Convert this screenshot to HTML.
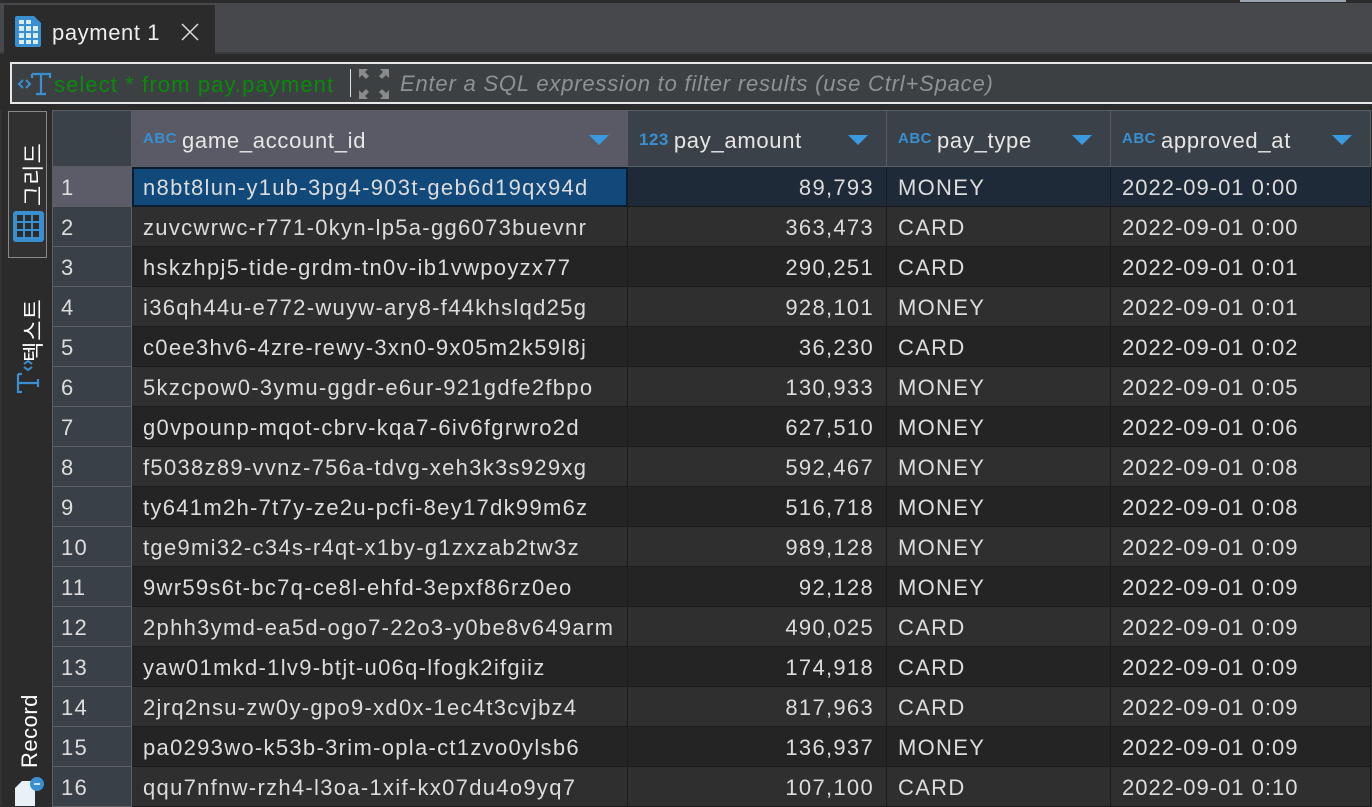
<!DOCTYPE html>
<html><head><meta charset="utf-8"><style>
*{margin:0;padding:0;box-sizing:border-box}
body{width:1372px;height:806px;overflow:hidden;background:#2b2b2b;font-family:"Liberation Sans","Noto Sans CJK KR",sans-serif;color:#dcdcdc;position:relative}
.topbar{position:absolute;left:0;top:3px;width:1372px;height:51px;background:#47484b;border-bottom:2px solid #38393b}
.tab{position:absolute;left:4px;top:5px;width:211px;height:49px;background:#2b2b2b}
.tab .t{position:absolute;left:48px;top:15px;font-size:22px;color:#eee;letter-spacing:0.6px}
.filter{position:absolute;left:10px;top:62px;width:1362px;height:42px;background:#3c4043;border:2px solid #e8e8e8;border-right:none}
.filter .q{position:absolute;left:42px;top:8px;font-size:22px;color:#0a8a0a;letter-spacing:1.1px}
.filter .sep{position:absolute;left:338px;top:5px;width:1px;height:28px;background:#ddd}
.filter .ph{position:absolute;left:388px;top:7px;font-size:22px;color:#8d9296;font-style:italic;letter-spacing:0.8px}
.side{position:absolute;left:0;top:110px;width:52px;height:696px;background:#2b2b2b;border-left:2px solid #333}
.vbox{position:absolute;left:8px;top:111px;width:39px;height:147px;border:1px solid #888;background:#313131}
.vt{position:absolute;transform:rotate(-90deg);transform-origin:left top;font-size:22px;color:#fff;white-space:nowrap;letter-spacing:1px}
table{position:absolute;left:52px;top:110px;border-collapse:collapse;table-layout:fixed}
td,th{height:40px;font-size:22px;white-space:nowrap;overflow:hidden;border:1px solid #1c1c1c;padding:2px 11px 0;font-weight:normal;text-align:left;letter-spacing:1.3px}
th{height:56px;background:#3b4148;border:1px solid #5a5d62;color:#e6e6e6;position:relative;padding-top:4px;letter-spacing:0.7px}
th .ic{font-size:15px;font-weight:bold;color:#3a8fd0;vertical-align:5px;margin-right:5px;letter-spacing:0.5px}
th .ar{position:absolute;right:18px;top:24px;width:0;height:0;border-left:10px solid transparent;border-right:10px solid transparent;border-top:10px solid #3a9ae0}
td.n{background:#3a4047;border:1px solid #5c5f63;color:#ddd;padding-left:8px}
tr.e td{background:#2f2f2f} tr.o td{background:#242424}
tr.e td.n,tr.o td.n{background:#3a4047}
tr.s td{background:#1f2a38} tr.s td.n{background:#5c5b68}
td.r{text-align:right;padding-right:12px}
td.d{letter-spacing:1px}
td.sel{background:#11497a!important;outline:2px solid #0b1d2e;outline-offset:-2px}
</style></head><body>
<div style="position:absolute;left:0;top:0;width:1372px;height:3px;background:#2b2b2b"></div>
<div style="position:absolute;left:1240px;top:0;width:106px;height:2px;background:#9aa3b0"></div>
<div class="topbar"></div>
<div class="tab">
<svg style="position:absolute;left:11px;top:11px" width="26" height="31" viewBox="0 0 26 31"><path d="M2 0h17l7 7v22a2 2 0 0 1-2 2H2a2 2 0 0 1-2-2V2a2 2 0 0 1 2-2z" fill="#3a8fd0"/><g fill="#d8ecfa"><rect x="4" y="4" width="5" height="4"/><rect x="11" y="4" width="5" height="4"/><rect x="4" y="10" width="5" height="5"/><rect x="11" y="10" width="5" height="5"/><rect x="18" y="10" width="5" height="5"/><rect x="4" y="17" width="5" height="5"/><rect x="11" y="17" width="5" height="5"/><rect x="18" y="17" width="5" height="5"/><rect x="4" y="24" width="5" height="4"/><rect x="11" y="24" width="5" height="4"/><rect x="18" y="24" width="5" height="4"/></g></svg>
<div class="t">payment 1</div>
<svg style="position:absolute;left:177px;top:18px" width="18" height="18"><path d="M1 1L17 17M17 1L1 17" stroke="#ddd" stroke-width="1.5"/></svg>
</div>
<div class="filter">
<svg style="position:absolute;left:4px;top:8px" width="36" height="24" viewBox="0 0 36 24"><path d="M7 8l-4 4 4 4M10 8l4 4-4 4" stroke="#3a8fd0" stroke-width="2" fill="none"/><path d="M16 2h18v4M25 2v20M20 22h10M16 2v4" stroke="#3a8fd0" stroke-width="2.2" fill="none"/></svg>
<div class="q">select * from pay.payment</div>
<div class="sep"></div>
<svg style="position:absolute;left:346px;top:4px" width="32" height="32" viewBox="0 0 32 32" fill="#8a8a8a"><path d="M1 1h9l-3 3 4 4-3 3-4-4-3 3zM31 1h-9l3 3-4 4 3 3 4-4 3 3zM1 31h9l-3-3 4-4-3-3-4 4-3-3zM31 31h-9l3-3-4-4 3-3 4 4 3-3z"/></svg>
<div class="ph">Enter a SQL expression to filter results (use Ctrl+Space)</div>
</div>
<div class="side"></div>
<div class="vbox"></div>
<div class="vt" style="left:16px;top:206px">그리드</div>
<svg style="position:absolute;left:13px;top:211px" width="31" height="31" viewBox="0 0 31 31"><rect width="31" height="31" rx="3" fill="#3a8fd0"/><g fill="#2b2b2b"><rect x="4" y="4" width="6" height="6"/><rect x="12" y="4" width="6" height="6"/><rect x="20" y="4" width="6" height="6"/><rect x="4" y="12" width="6" height="6"/><rect x="12" y="12" width="6" height="6"/><rect x="20" y="12" width="6" height="6"/><rect x="4" y="20" width="6" height="6"/><rect x="12" y="20" width="6" height="6"/><rect x="20" y="20" width="6" height="6"/></g></svg>
<div class="vt" style="left:16px;top:362px">텍스트</div>
<svg style="position:absolute;left:16px;top:360px" width="24" height="36" viewBox="0 0 24 36"><path d="M8 4l4-3 4 3M8 7l4 3 4-3" stroke="#3a8fd0" stroke-width="2" fill="none"/><path d="M2 14v18h4M2 14h4M2 32h4M2 23h20M22 19v8" stroke="#3a8fd0" stroke-width="2.2" fill="none"/></svg>
<div class="vt" style="left:17px;top:768px;font-size:22px;letter-spacing:0.5px">Record</div>
<svg style="position:absolute;left:13px;top:776px" width="32" height="30" viewBox="0 0 32 30"><path d="M9 5h13v25H2V12z" fill="#e8f0f8"/><circle cx="24" cy="8" r="7" fill="#3a8fd0"/><path d="M21 8h6" stroke="#fff" stroke-width="1.5"/></svg>
<table>
<colgroup><col style="width:79px"><col style="width:496px"><col style="width:259px"><col style="width:224px"><col style="width:260px"></colgroup>
<tr><th></th><th style="background:#5a5a66"><span class="ic">ABC</span>game_account_id<span class="ar"></span></th><th><span class="ic" style="font-size:17px;vertical-align:3px">123</span>pay_amount<span class="ar"></span></th><th><span class="ic">ABC</span>pay_type<span class="ar"></span></th><th><span class="ic">ABC</span>approved_at<span class="ar"></span></th></tr>
<tr class="s"><td class="n">1</td><td class="sel">n8bt8lun-y1ub-3pg4-903t-geb6d19qx94d</td><td class="r">89,793</td><td>MONEY</td><td class="d">2022-09-01 0:00</td></tr>
<tr class="e"><td class="n">2</td><td>zuvcwrwc-r771-0kyn-lp5a-gg6073buevnr</td><td class="r">363,473</td><td>CARD</td><td class="d">2022-09-01 0:00</td></tr>
<tr class="o"><td class="n">3</td><td>hskzhpj5-tide-grdm-tn0v-ib1vwpoyzx77</td><td class="r">290,251</td><td>CARD</td><td class="d">2022-09-01 0:01</td></tr>
<tr class="e"><td class="n">4</td><td>i36qh44u-e772-wuyw-ary8-f44khslqd25g</td><td class="r">928,101</td><td>MONEY</td><td class="d">2022-09-01 0:01</td></tr>
<tr class="o"><td class="n">5</td><td>c0ee3hv6-4zre-rewy-3xn0-9x05m2k59l8j</td><td class="r">36,230</td><td>CARD</td><td class="d">2022-09-01 0:02</td></tr>
<tr class="e"><td class="n">6</td><td>5kzcpow0-3ymu-ggdr-e6ur-921gdfe2fbpo</td><td class="r">130,933</td><td>MONEY</td><td class="d">2022-09-01 0:05</td></tr>
<tr class="o"><td class="n">7</td><td>g0vpounp-mqot-cbrv-kqa7-6iv6fgrwro2d</td><td class="r">627,510</td><td>MONEY</td><td class="d">2022-09-01 0:06</td></tr>
<tr class="e"><td class="n">8</td><td>f5038z89-vvnz-756a-tdvg-xeh3k3s929xg</td><td class="r">592,467</td><td>MONEY</td><td class="d">2022-09-01 0:08</td></tr>
<tr class="o"><td class="n">9</td><td>ty641m2h-7t7y-ze2u-pcfi-8ey17dk99m6z</td><td class="r">516,718</td><td>MONEY</td><td class="d">2022-09-01 0:08</td></tr>
<tr class="e"><td class="n">10</td><td>tge9mi32-c34s-r4qt-x1by-g1zxzab2tw3z</td><td class="r">989,128</td><td>MONEY</td><td class="d">2022-09-01 0:09</td></tr>
<tr class="o"><td class="n">11</td><td>9wr59s6t-bc7q-ce8l-ehfd-3epxf86rz0eo</td><td class="r">92,128</td><td>MONEY</td><td class="d">2022-09-01 0:09</td></tr>
<tr class="e"><td class="n">12</td><td>2phh3ymd-ea5d-ogo7-22o3-y0be8v649arm</td><td class="r">490,025</td><td>CARD</td><td class="d">2022-09-01 0:09</td></tr>
<tr class="o"><td class="n">13</td><td>yaw01mkd-1lv9-btjt-u06q-lfogk2ifgiiz</td><td class="r">174,918</td><td>CARD</td><td class="d">2022-09-01 0:09</td></tr>
<tr class="e"><td class="n">14</td><td>2jrq2nsu-zw0y-gpo9-xd0x-1ec4t3cvjbz4</td><td class="r">817,963</td><td>CARD</td><td class="d">2022-09-01 0:09</td></tr>
<tr class="o"><td class="n">15</td><td>pa0293wo-k53b-3rim-opla-ct1zvo0ylsb6</td><td class="r">136,937</td><td>MONEY</td><td class="d">2022-09-01 0:09</td></tr>
<tr class="e"><td class="n">16</td><td>qqu7nfnw-rzh4-l3oa-1xif-kx07du4o9yq7</td><td class="r">107,100</td><td>CARD</td><td class="d">2022-09-01 0:10</td></tr>
</table>
</body></html>
